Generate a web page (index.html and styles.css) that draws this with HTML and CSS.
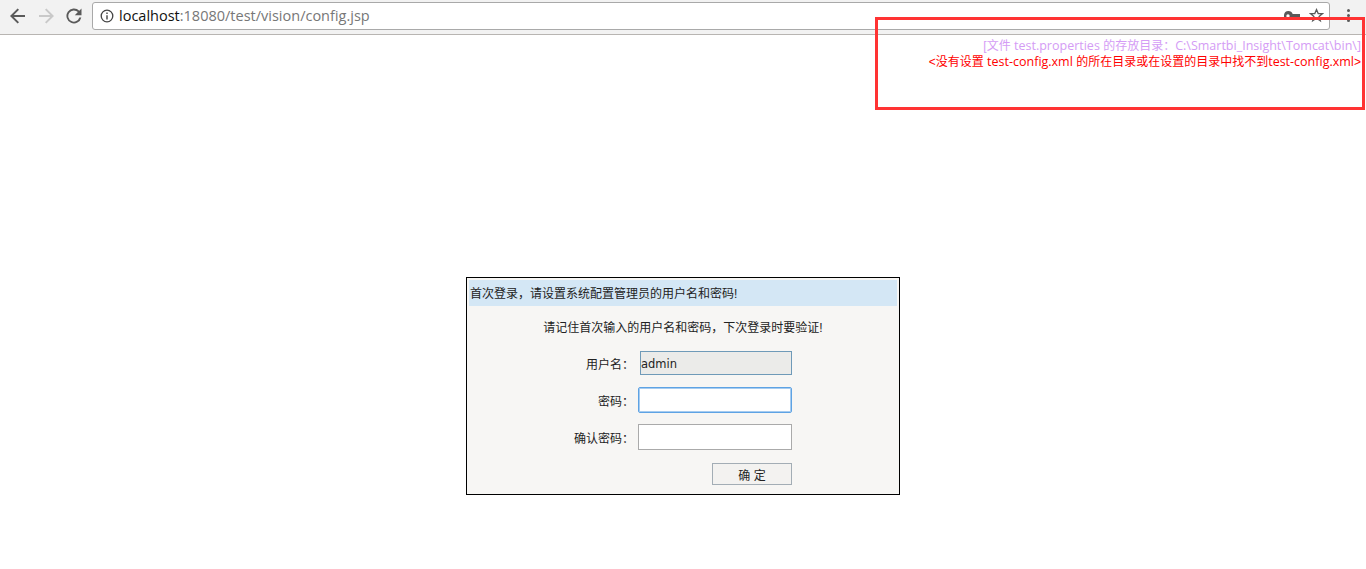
FILE: index.html
```html
<!DOCTYPE html>
<html lang="zh-CN">
<head>
    <meta charset="UTF-8">
    <title>config.jsp</title>
    <link rel="stylesheet" href="styles.css">
</head>
<body>
    <div class="toolbar">
        <svg class="nav" width="18" height="18" viewBox="0 0 18 18"><path d="M16 8H4.800l5.200-5.200L8.600 1.500 1 9l7.600 7.500 1.400-1.300L4.800 10H16z" fill="#5a5a5a"/></svg>
        <svg class="nav" width="18" height="18" viewBox="0 0 18 18"><path d="M2 8h11.200L8 2.800l1.400-1.300L17 9l-7.600 7.500-1.400-1.300L13.200 10H2z" fill="#c9c9c9"/></svg>
        <svg class="nav" width="18" height="18" viewBox="0 0 18 18"><path d="M14.300 3.700A7.500 7.500 0 1 0 16.300 10.500h-2a5.600 5.600 0 1 1-1.400-5.400L9.800 8.200H16.500V1.500z" fill="#5a5a5a"/></svg>
        <div class="omnibox">
            <svg class="info" width="14" height="14" viewBox="0 0 14 14"><circle cx="7" cy="7" r="5.800" fill="none" stroke="#444" stroke-width="1.300"/><path d="M6.300 6.200h1.400v4.200H6.300zM6.300 3.500h1.400v1.500H6.300z" fill="#444"/></svg>
            <span class="host">localhost</span><span class="url-rest">:18080/test/vision/config.jsp</span>
            <span class="omni-icons">
                <svg width="16" height="10" viewBox="0 0 16 10"><path d="M4.500 0a4.500 4.500 0 1 0 4.200 6H11v2h2V6h3V3H8.700A4.500 4.500 0 0 0 4.500 0zm-.5 3.300a1.700 1.700 0 1 1 0 3.400 1.700 1.700 0 0 1 0-3.400z" fill="#5a5a5a"/></svg>
                <svg width="15" height="15" viewBox="0 0 15 15"><path d="M7.500 1.600l1.700 4h4.300l-3.400 2.800 1.200 4.300-3.800-2.400-3.800 2.400 1.200-4.300L1.500 5.600h4.300z" fill="none" stroke="#5a5a5a" stroke-width="1.300"/></svg>
            </span>
        </div>
        <div class="menu-dots"><i></i><i></i><i></i></div>
    </div>

    <div class="messages">
        <div class="msg-path">[文件 <span class="latin">test.properties</span> 的存放目录：<span class="latin">C:\Smartbi_Insight\Tomcat\bin\]</span></div>
        <div class="msg-error">&lt;没有设置 <span class="latin">test-config.xml</span> 的所在目录或在设置的目录中找不到<span class="latin">test-config.xml</span>&gt;</div>
    </div>
    <div class="highlight-box"></div>

    <div class="dialog">
        <div class="dialog-title">首次登录，请设置系统配置管理员的用户名和密码!</div>
        <p class="dialog-note">请记住首次输入的用户名和密码，下次登录时要验证!</p>
        <form class="login-form">
            <label class="row-label">用户名：</label>
            <input class="field field-disabled" type="text" value="admin" disabled>
            <label class="row-label">密码：</label>
            <input class="field field-focus" type="password">
            <label class="row-label">确认密码：</label>
            <input class="field" type="password">
            <button class="submit" type="button">确 定</button>
        </form>
    </div>
</body>
</html>
```

FILE: styles.css
```css
body {
    margin: 0;
    background: #fff;
    color: #222;
    font-family: "Liberation Sans", "Noto Sans CJK SC", sans-serif;
    font-size: 12px;
}
.toolbar {
    display: flex;
    align-items: center;
    box-sizing: border-box;
    height: 35px;
    padding: 0 0 3px 9px;
    background: #f2f2f2;
    border-bottom: 1px solid #b8b5b2;
}
.nav {
    margin-right: 10px;
    flex: none;
}
.nav:nth-child(3) {
    margin-right: 9px;
}
.omnibox {
    display: flex;
    align-items: center;
    box-sizing: border-box;
    width: 1238px;
    height: 28px;
    padding: 0 7px;
    background: #fff;
    border: 1px solid #a9a9a9;
    border-radius: 3px;
    font-family: "Open Sans", sans-serif;
    font-size: 14.5px;
}
.info {
    margin-right: 5px;
}
.host {
    color: #111;
}
.url-rest {
    color: #777;
}
.omni-icons {
    display: flex;
    align-items: center;
    gap: 9px;
    margin-left: auto;
    margin-right: -2px;
}
.menu-dots {
    display: flex;
    flex-direction: column;
    gap: 2px;
    margin-left: 17px;
}
.menu-dots i {
    width: 3px;
    height: 3px;
    border-radius: 50%;
    background: #5a5a5a;
}
.messages {
    padding: 3px 5px 0 0;
    text-align: right;
    line-height: 16px;
}
.latin {
    font-family: "Open Sans", sans-serif;
    font-size: 12.5px;
}
.msg-path {
    color: #d49cf5;
}
.msg-error {
    color: #f00;
}
.highlight-box {
    position: absolute;
    left: 875px;
    top: 17px;
    width: 484px;
    height: 87px;
    border: 3px solid #f33;
}
.dialog {
    box-sizing: border-box;
    width: 434px;
    height: 218px;
    margin: 207px auto 0;
    padding: 2px;
    background: #f7f6f4;
    border: 1px solid #000;
}
.dialog-title {
    height: 26px;
    padding-left: 1px;
    line-height: 28px;
    background: #d4e7f5;
}
.dialog-note {
    margin: 14px 0 0;
    line-height: 16px;
    text-align: center;
}
.login-form {
    display: grid;
    grid-template-columns: 162px 154px;
    grid-auto-rows: 26px;
    row-gap: 11px;
    column-gap: 4px;
    align-items: center;
    margin: 14px 0 0 3px;
}
.row-label {
    text-align: right;
}
.field {
    box-sizing: border-box;
    width: 154px;
    height: 26px;
    padding: 0;
    background: #fff;
    border: 1px solid #aaa;
    font-family: "DejaVu Sans", sans-serif;
    font-size: 11.5px;
    color: #222;
}
.field-disabled {
    justify-self: end;
    width: 152px;
    height: 24px;
    padding-top: 2px;
    background: #ebebe9;
    border-color: #6f9ab8;
}
.field-focus {
    border-color: #5ea3e4;
    box-shadow: inset 0 0 0 1px rgba(94, 163, 228, 0.55);
    border-radius: 2px;
}
.submit {
    grid-column: 2;
    justify-self: end;
    width: 80px;
    height: 22px;
    padding: 0;
    background: #f3f2f0;
    border: 1px solid #a3adb5;
    color: #222;
    font-family: inherit;
    font-size: 12px;
}
```
